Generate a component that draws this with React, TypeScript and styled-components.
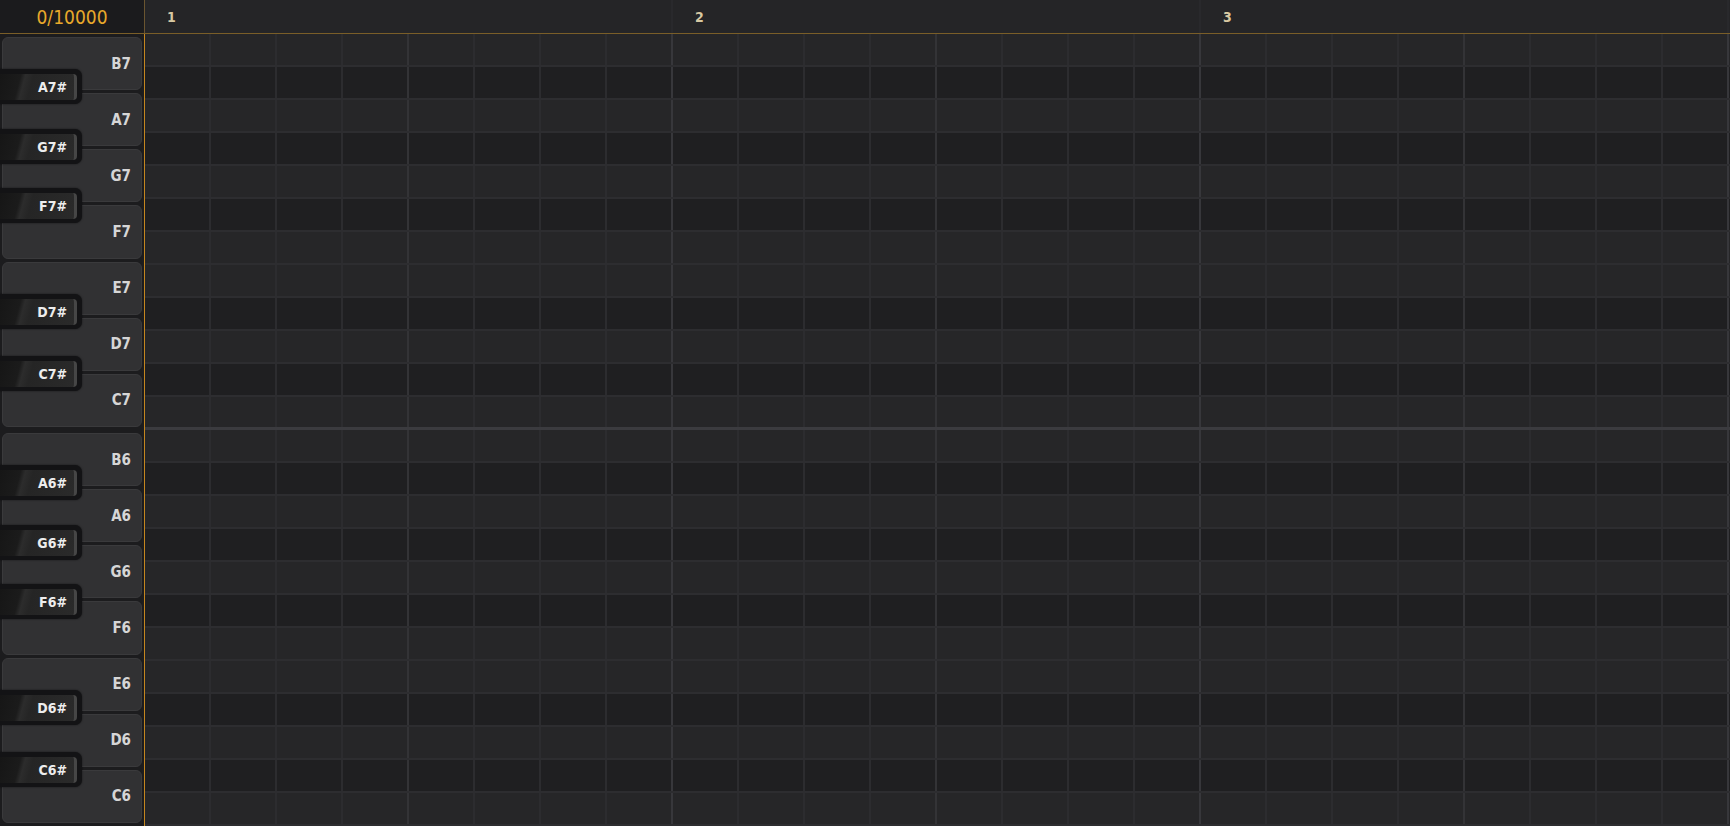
import React from 'react';
import styled, { createGlobalStyle } from 'styled-components';

const GlobalStyle = createGlobalStyle`
  *, *::before, *::after { box-sizing: border-box; }
  html, body { margin: 0; padding: 0; background: #1f1f21; overflow: hidden; }
  #root { width: 1730px; height: 826px; }
`;

const FONT = `"DejaVu Sans Condensed", "DejaVu Sans", "Liberation Sans", sans-serif`;

const Shell = styled.div`
  width: 1730px;
  height: 826px;
  display: flex;
  flex-direction: column;
  font-family: ${FONT};
  background: #1f1f21;
  overflow: hidden;
`;

const Header = styled.header`
  display: flex;
  height: 34px;
  flex-shrink: 0;
  border-bottom: 1px solid #7a5e28;
`;

const Counter = styled.div`
  width: 145px;
  flex-shrink: 0;
  background: #1b1b1d;
  border-right: 1px solid #6a5530;
  color: #e8a92b;
  font-size: 19px;
  display: flex;
  align-items: center;
  justify-content: center;
  padding-top: 1px;
`;

const Ruler = styled.div`
  flex: 1;
  display: flex;
  background: #252527;
  overflow: hidden;
`;

const BarLabel = styled.div`
  width: 528px;
  flex-shrink: 0;
  padding-left: 22px;
  border-right: 2px solid #29292c;
  color: #d8c8a2;
  font-size: 14px;
  font-weight: bold;
  display: flex;
  align-items: center;
  padding-top: 1px;
`;

const Body = styled.div`
  flex: 1;
  display: flex;
  min-height: 0;
`;

const Keyboard = styled.div`
  width: 145px;
  flex-shrink: 0;
  background: #1c1c1e;
  border-right: 1px solid #c4861f;
  display: flex;
  flex-direction: column;
`;

const Octave = styled.div`
  position: relative;
  height: 396px;
  flex-shrink: 0;
  display: flex;
  flex-direction: column;
  padding: 1.5px 0;
`;

const WhiteKey = styled.div`
  flex: 1;
  margin: 1.5px 2px 1.5px 2px;
  background: #313133;
  border: 1px solid #3a3a3c;
  border-radius: 6px;
  display: flex;
  align-items: center;
  justify-content: flex-end;
  padding-right: 10px;
  color: #d6d6d6;
  font-size: 15px;
  font-weight: bold;
`;

const BlackKey = styled.div<{ $top: number }>`
  position: absolute;
  left: 0;
  top: ${(p) => p.$top}px;
  width: 82px;
  height: 35px;
  background: #131315;
  border-radius: 0 7px 7px 0;
  padding: 5px 5px 4px 0;
  box-shadow: 0 0 2px rgba(0, 0, 0, 0.6);
  z-index: 2;
`;

const BlackFace = styled.div`
  height: 100%;
  border-radius: 0 4px 4px 0;
  background: linear-gradient(105deg, #161616 0%, #1b1b1b 26%, #2c2c2c 32%, #252525 42%, #2a2a2a 100%);
  border-right: 3px solid #464646;
  display: flex;
  align-items: center;
  justify-content: flex-end;
  padding-right: 7px;
  color: #ededed;
  font-size: 14px;
  font-weight: bold;
`;

const Grid = styled.div`
  flex: 1;
  display: flex;
  flex-direction: column;
  overflow: hidden;
`;

const GridRow = styled.div<{ $dark: boolean; $octaveEnd: boolean }>`
  display: flex;
  height: 33px;
  flex-shrink: 0;
  background: ${(p) => (p.$dark ? '#1f1f21' : '#262628')};
  border-bottom: ${(p) => (p.$octaveEnd ? '3px solid #3b3b3f' : '2px solid #2d2d30')};
`;

const Cell = styled.div<{ $kind: 'bar' | 'beat' | 'step' }>`
  width: 66px;
  flex-shrink: 0;
  border-right: 2px solid
    ${(p) => (p.$kind === 'bar' ? '#37373b' : p.$kind === 'beat' ? '#333336' : '#2c2c2f')};
`;

const WHITE = ['B', 'A', 'G', 'F', 'E', 'D', 'C'];
const BLACK = [
  { n: 'A', top: 35 },
  { n: 'G', top: 95 },
  { n: 'F', top: 154 },
  { n: 'D', top: 260 },
  { n: 'C', top: 322 },
];
const ROW_NOTES = ['B', 'A#', 'A', 'G#', 'G', 'F#', 'F', 'E', 'D#', 'D', 'C#', 'C'];
const OCTAVES = [7, 6];
const COLS = 24;

export default function App() {
  const rows = OCTAVES.flatMap((o) =>
    ROW_NOTES.map((n, i) => ({ key: `${n}${o}`, dark: n.includes('#'), end: i === 11 && o === 7 }))
  );
  return (
    <Shell>
      <GlobalStyle />
      <Header>
        <Counter>0/10000</Counter>
        <Ruler>
          {[1, 2, 3].map((b) => (
            <BarLabel key={b}>{b}</BarLabel>
          ))}
        </Ruler>
      </Header>
      <Body>
        <Keyboard>
          {OCTAVES.map((o) => (
            <Octave key={o}>
              {WHITE.map((w) => (
                <WhiteKey key={w}>{`${w}${o}`}</WhiteKey>
              ))}
              {BLACK.map((b) => (
                <BlackKey key={b.n} $top={b.top}>
                  <BlackFace>{`${b.n}${o}#`}</BlackFace>
                </BlackKey>
              ))}
            </Octave>
          ))}
        </Keyboard>
        <Grid>
          {rows.map((r) => (
            <GridRow key={r.key} $dark={r.dark} $octaveEnd={r.end}>
              {Array.from({ length: COLS }, (_, c) => (
                <Cell
                  key={c}
                  $kind={(c + 1) % 8 === 0 ? 'bar' : (c + 1) % 4 === 0 ? 'beat' : 'step'}
                />
              ))}
            </GridRow>
          ))}
        </Grid>
      </Body>
    </Shell>
  );
}
